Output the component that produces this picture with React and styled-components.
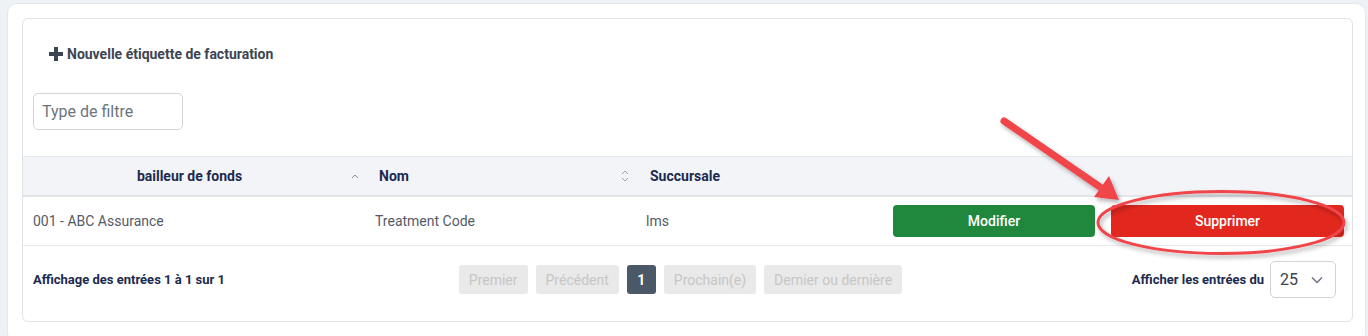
import React from "react";
import styled, { createGlobalStyle } from "styled-components";

const Global = createGlobalStyle`
  html, body { margin: 0; padding: 0; }
  body {
    background: #eef1f5;
    font-family: Roboto, "Liberation Sans", Arial, sans-serif;
    width: 1368px;
    height: 336px;
    overflow: hidden;
  }
  * { box-sizing: border-box; }
`;

const Page = styled.div`
  position: relative;
  padding: 3px 2px 0 7px;
`;

const OuterCard = styled.div`
  background: #fff;
  border: 1px solid #e4e7eb;
  border-radius: 10px;
  padding: 14px 12px 20px 14px;
`;

const InnerCard = styled.div`
  border: 1px solid #dfe2e6;
  border-radius: 6px;
  background: #fff;
  overflow: hidden;
`;

const Toolbar = styled.div`
  padding: 17px 10px 0 10px;
  display: flex;
  flex-direction: column;
  align-items: flex-start;
`;

const AddButton = styled.button`
  display: inline-flex;
  align-items: center;
  gap: 4px;
  height: 36px;
  padding: 0 16px;
  background: transparent;
  border: none;
  font-family: inherit;
  font-weight: 700;
  font-size: 14px;
  color: #3d4452;
`;

const FilterInput = styled.input`
  margin-top: 21px;
  width: 150px;
  height: 37px;
  border: 1px solid #ced4da;
  border-radius: 5px;
  padding: 0 8px;
  font-family: inherit;
  font-size: 16px;
  color: #495057;
  &::placeholder { color: #6c757d; }
`;

const Table = styled.table`
  margin-top: 26px;
  width: 100%;
  border-collapse: collapse;
  table-layout: fixed;
`;

const Th = styled.th`
  background: #f3f4f8;
  border-top: 1px solid #e6e9ee;
  border-bottom: 2px solid #e2e5ea;
  height: 39px;
  padding: 0 ${(p) => p.$pr || 10}px 0 ${(p) => p.$pl || 10}px;
  font-size: 14px;
  font-weight: 700;
  color: #1b2a4e;
  text-align: left;
`;

const ThInner = styled.div`
  display: flex;
  align-items: center;
`;

const ThLabel = styled.span`
  flex: 1;
  padding-right: ${(p) => p.$pr || 0}px;
  text-align: ${(p) => (p.$center ? "center" : "left")};
`;

const SortIcon = styled.span`
  width: 10px;
  display: flex;
  justify-content: center;
  color: #8a8f98;
`;

const Td = styled.td`
  height: 50px;
  border-bottom: 1px solid #e6e8eb;
  padding: 0 ${(p) => p.$pr || 8}px 0 ${(p) => p.$pl || 7}px;
  font-size: 14px;
  color: #545b66;
`;

const Actions = styled.div`
  display: grid;
  grid-template-columns: 202fr 233fr;
  gap: 16px;
`;

const ActionButton = styled.button`
  height: 32px;
  border: none;
  border-radius: 4px;
  background: ${(p) => p.$bg};
  color: #fff;
  font-family: inherit;
  font-size: 14px;
  font-weight: 500;
`;

const Footer = styled.div`
  display: flex;
  align-items: center;
  justify-content: space-between;
  padding: 15px 16px 23px 10px;
`;

const Info = styled.div`
  font-size: 13px;
  font-weight: 700;
  color: #1b2a4e;
`;

const Pager = styled.div`
  display: flex;
  gap: 8px;
  margin-left: 4px;
`;

const PageButton = styled.button`
  height: 29px;
  padding: 0 10px;
  min-width: 29px;
  border: none;
  border-radius: 3px;
  font-family: inherit;
  font-size: 14px;
  background: ${(p) => (p.$active ? "#4b5868" : "#e9e9e9")};
  color: ${(p) => (p.$active ? "#fff" : "#c6c6c6")};
  font-weight: ${(p) => (p.$active ? 700 : 400)};
`;

const Length = styled.div`
  display: flex;
  align-items: center;
  gap: 6px;
`;

const Select = styled.div`
  width: 66px;
  height: 37px;
  border: 1px solid #ced4da;
  border-radius: 5px;
  display: flex;
  align-items: center;
  justify-content: space-between;
  padding: 0 12px 0 9px;
  font-size: 16px;
  color: #3b4350;
`;

const Overlay = styled.svg`
  position: absolute;
  left: 0;
  top: 0;
  pointer-events: none;
`;

const Plus = () => (
  <svg width="14" height="14" viewBox="0 0 14 14">
    <rect x="5" y="0" width="4" height="14" fill="#3d4452" />
    <rect x="0" y="5" width="14" height="4" fill="#3d4452" />
  </svg>
);

const Caret = () => (
  <svg width="8" height="6" viewBox="0 0 8 6">
    <path d="M1 5 L4 2 L7 5" fill="none" stroke="#8a8f98" strokeWidth="1" />
  </svg>
);

const Both = () => (
  <svg width="8" height="14" viewBox="0 0 8 14">
    <path d="M1 5 L4 2 L7 5" fill="none" stroke="#9aa0a8" strokeWidth="1" />
    <path d="M1 9 L4 12 L7 9" fill="none" stroke="#9aa0a8" strokeWidth="1" />
  </svg>
);

const Chevron = () => (
  <svg width="12" height="8" viewBox="0 0 12 8">
    <path d="M1 1.5 L6 6.5 L11 1.5" fill="none" stroke="#6b7280" strokeWidth="1.5" />
  </svg>
);

export default function App() {
  return (
    <>
      <Global />
      <Page>
        <OuterCard>
          <InnerCard>
            <Toolbar>
              <AddButton>
                <Plus />
                Nouvelle étiquette de facturation
              </AddButton>
              <FilterInput placeholder="Type de filtre" />
            </Toolbar>
            <Table>
              <colgroup>
                <col style={{ width: 345 }} />
                <col style={{ width: 272 }} />
                <col style={{ width: 245 }} />
                <col />
              </colgroup>
              <thead>
                <tr>
                  <Th $pl={10} $pr={8}>
                    <ThInner>
                      <ThLabel $center $pr={4}>bailleur de fonds</ThLabel>
                      <SortIcon><Caret /></SortIcon>
                    </ThInner>
                  </Th>
                  <Th $pl={11} $pr={10}>
                    <ThInner>
                      <ThLabel>Nom</ThLabel>
                      <SortIcon><Both /></SortIcon>
                    </ThInner>
                  </Th>
                  <Th $pl={10}>Succursale</Th>
                  <Th />
                </tr>
              </thead>
              <tbody>
                <tr>
                  <Td $pl={10}>001 - ABC Assurance</Td>
                  <Td>Treatment Code</Td>
                  <Td $pl={6}>lms</Td>
                  <Td $pl={8} $pr={8}>
                    <Actions>
                      <ActionButton $bg="#1f883d">Modifier</ActionButton>
                      <ActionButton $bg="#e2281e">Supprimer</ActionButton>
                    </Actions>
                  </Td>
                </tr>
              </tbody>
            </Table>
            <Footer>
              <Info>Affichage des entrées 1 à 1 sur 1</Info>
              <Pager>
                <PageButton>Premier</PageButton>
                <PageButton>Précédent</PageButton>
                <PageButton $active>1</PageButton>
                <PageButton>Prochain(e)</PageButton>
                <PageButton>Dernier ou dernière</PageButton>
              </Pager>
              <Length>
                <Info>Afficher les entrées du</Info>
                <Select>
                  25
                  <Chevron />
                </Select>
              </Length>
            </Footer>
          </InnerCard>
        </OuterCard>
        <Overlay width="1368" height="336" viewBox="0 0 1368 336">
          <defs>
            <filter id="sh" x="-20%" y="-20%" width="140%" height="140%">
              <feDropShadow dx="2" dy="3" stdDeviation="2" floodColor="#000" floodOpacity="0.3" />
            </filter>
          </defs>
          <g filter="url(#sh)">
            <line x1="1004" y1="121" x2="1100" y2="187" stroke="#f0454a" strokeWidth="7" strokeLinecap="round" />
            <polygon points="1119,200 1094,197 1109,176" fill="#f0454a" />
            <ellipse cx="1221" cy="222.5" rx="123" ry="31" fill="none" stroke="#f0454a" strokeWidth="3" />
          </g>
        </Overlay>
      </Page>
    </>
  );
}
